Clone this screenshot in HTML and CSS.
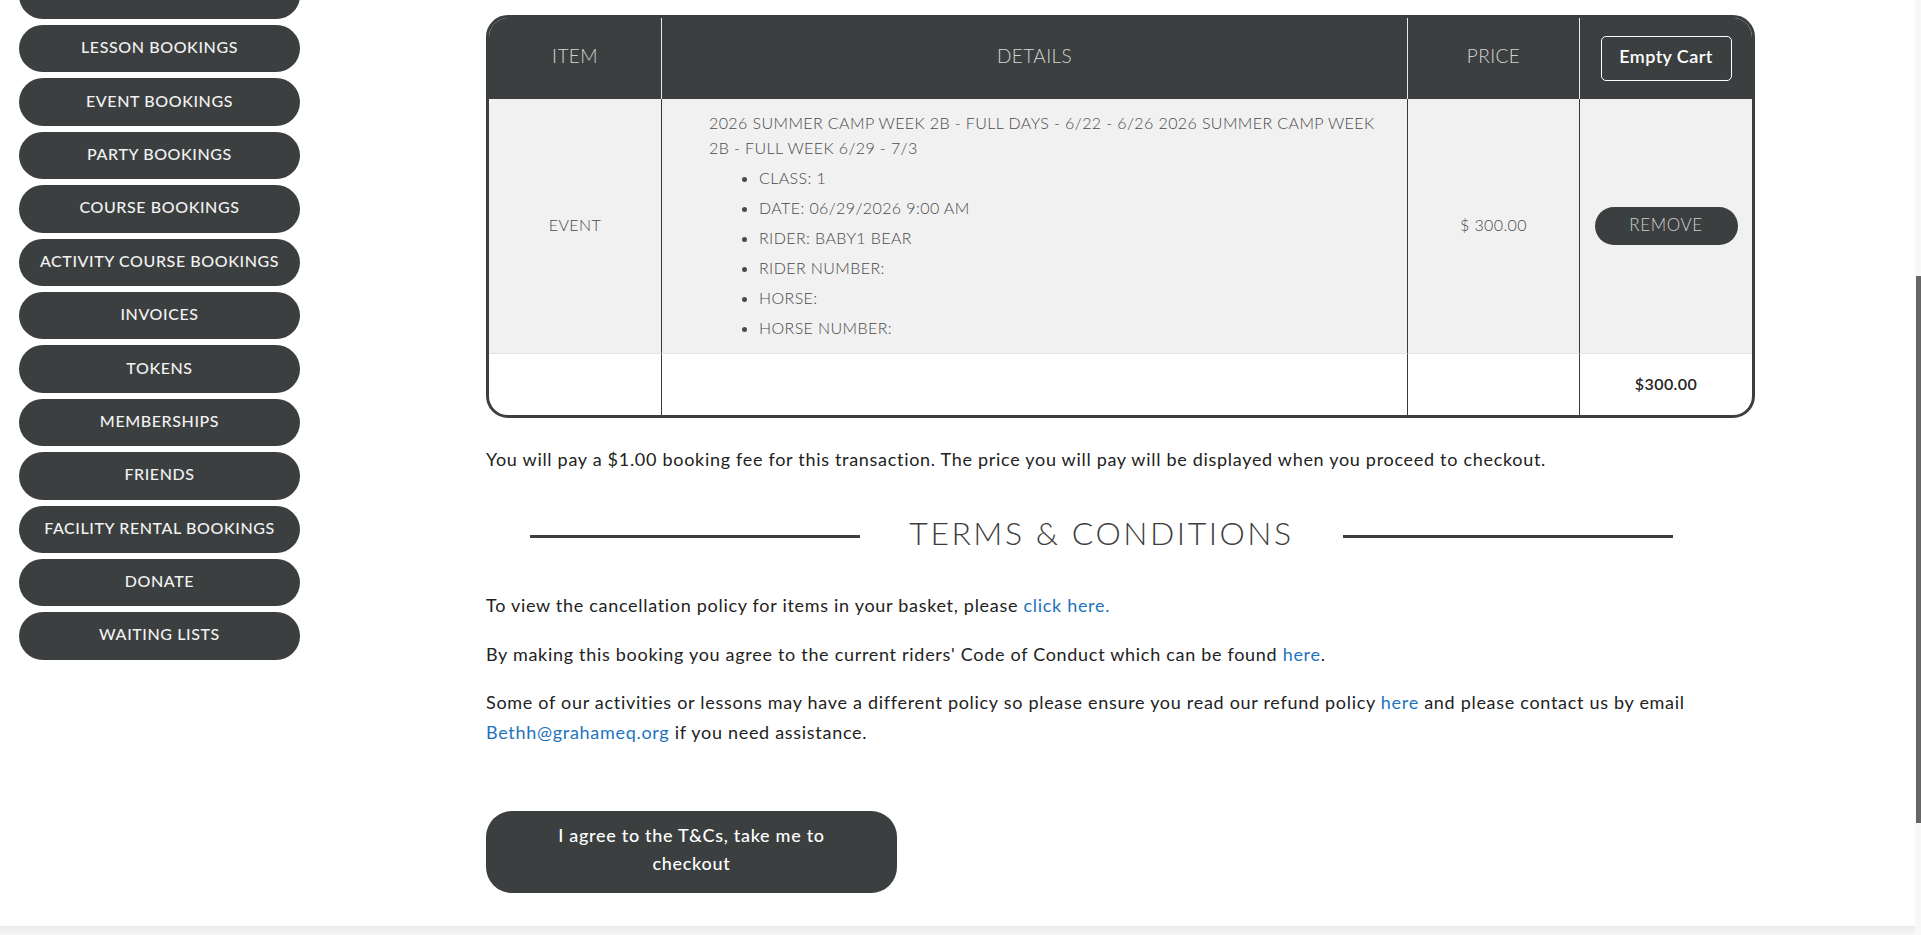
FILE: index.html
```html
<!doctype html>
<html>
    <head>
        <meta charset="utf-8">
        <meta name="viewport" content="width=device-width, initial-scale=1.0">
        <title>Basket</title>
        <link rel="stylesheet" href="styles.css">
    </head>
    <body>
        <div class="page">
            <nav class="sidebar">
                <a class="side-btn" href="#"></a>
                <a class="side-btn" href="#">Lesson Bookings</a>
                <a class="side-btn" href="#">Event Bookings</a>
                <a class="side-btn" href="#">Party Bookings</a>
                <a class="side-btn" href="#">Course Bookings</a>
                <a class="side-btn" href="#">Activity Course Bookings</a>
                <a class="side-btn" href="#">Invoices</a>
                <a class="side-btn" href="#">Tokens</a>
                <a class="side-btn" href="#">Memberships</a>
                <a class="side-btn" href="#">Friends</a>
                <a class="side-btn" href="#">Facility Rental Bookings</a>
                <a class="side-btn" href="#">Donate</a>
                <a class="side-btn" href="#">Waiting Lists</a>
            </nav>

            <main class="content">
                <div class="cart">
                    <table class="cart-table">
                        <colgroup>
                            <col class="col-item">
                            <col class="col-details">
                            <col class="col-price">
                            <col class="col-action">
                        </colgroup>
                        <thead>
                            <tr>
                                <th>Item</th>
                                <th>Details</th>
                                <th>Price</th>
                                <th><button type="button" class="empty-cart">Empty Cart</button></th>
                            </tr>
                        </thead>
                        <tbody>
                            <tr>
                                <td>Event</td>
                                <td class="details">
                                    <p>2026 Summer Camp Week 2B - Full Days - 6/22 - 6/26 2026 Summer Camp Week 2B - Full Week 6/29 - 7/3</p>
                                    <ul>
                                        <li>Class: 1</li>
                                        <li>Date: 06/29/2026 9:00 AM</li>
                                        <li>Rider: Baby1 Bear</li>
                                        <li>Rider Number:</li>
                                        <li>Horse:</li>
                                        <li>Horse Number:</li>
                                    </ul>
                                </td>
                                <td>$ 300.00</td>
                                <td class="action"><button type="button" class="remove">Remove</button></td>
                            </tr>
                        </tbody>
                        <tfoot>
                            <tr>
                                <td></td>
                                <td></td>
                                <td></td>
                                <td class="total">$300.00</td>
                            </tr>
                        </tfoot>
                    </table>
                </div>

                <p class="fee">You will pay a $1.00 booking fee for this transaction. The price you will pay will be displayed when you proceed to checkout.</p>

                <h2 class="section-title"><span class="rule"></span><span>Terms &amp; Conditions</span><span class="rule"></span></h2>

                <p>To view the cancellation policy for items in your basket, please <a href="#">click here.</a></p>
                <p>By making this booking you agree to the current riders' Code of Conduct which can be found <a href="#">here</a>.</p>
                <p>Some of our activities or lessons may have a different policy so please ensure you read our refund policy <a href="#">here</a> and please contact us by email <a href="#">Bethh@grahameq.org</a> if you need assistance.</p>

                <div class="actions">
                    <button type="button" class="checkout">I agree to the T&amp;Cs, take me to checkout</button>
                </div>
            </main>
        </div>

        <div class="footer-strip"></div>
        <div class="scrollbar"><div class="thumb"></div></div>
    </body>
</html>
```

FILE: styles.css
```css
html, body {
    margin: 0;
    padding: 0;
    height: 100%;
    overflow: hidden;
}
body {
    font-family: Lato, "Open Sans", sans-serif;
    color: #222;
    background: #fff;
    display: flex;
    flex-direction: column;
}
.page {
    flex: 1;
    display: flex;
    align-items: flex-start;
    overflow: hidden;
}


/* sidebar */
.sidebar {
    width: 281px;
    margin: -28.4px 0 0 19px;
    display: flex;
    flex-direction: column;
    gap: 6px;
}
.side-btn {
    box-sizing: border-box;
    height: 47.4px;
    padding-bottom: 4px;
    border-radius: 24px;
    background: #3c3f3f;
    color: #f2f2f2;
    display: flex;
    align-items: center;
    justify-content: center;
    font-size: 16px;
    font-weight: 500;
    letter-spacing: .6px;
    text-transform: uppercase;
    text-decoration: none;
}


/* main column */
.content {
    width: 1231px;
    margin-left: 186px;
    padding-top: 15px;
    font-size: 18px;
    letter-spacing: .7px;
}
.content p {
    margin: 0 0 19px;
    line-height: 29.5px;
}
.content a {
    color: #1e73be;
    text-decoration: none;
}

.cart {
    width: 1263px;
    border: 3px solid #3c3f3f;
    border-radius: 22px;
    overflow: hidden;
}
.cart-table {
    width: 100%;
    border-collapse: separate;
    border-spacing: 0;
    table-layout: fixed;
    letter-spacing: 0;
}
.col-item { width: 173px; }
.col-details { width: 746px; }
.col-price { width: 172px; }
.col-action { width: 172px; }

.cart-table th {
    height: 75px;
    padding: 0 0 6px;
    background: #3c3f3f;
    color: #d4d4d4;
    font-size: 19px;
    font-weight: 300;
    letter-spacing: .4px;
    text-transform: uppercase;
    border-right: 1px solid #e8e8e8;
}
.cart-table th:last-child {
    padding-bottom: 0;
    height: 81px;
}
.cart-table td {
    padding: 0 0 4px;
    text-align: center;
    vertical-align: middle;
    border-right: 1px solid #3a3a3a;
    color: #4a4a4a;
    font-size: 16px;
    font-weight: 300;
    letter-spacing: .4px;
    text-transform: uppercase;
}
.cart-table th:last-child, .cart-table td:last-child {
    border-right: 0;
}
.cart-table tbody td {
    background: #f1f1f1;
    border-bottom: 1px solid #e2e2e2;
}
.cart-table td.action {
    padding: 0;
}
.cart-table tfoot td {
    height: 59px;
    padding-bottom: 2px;
}

.cart-table td.details {
    text-align: left;
    padding: 12px 12px 7px 47px;
}
.details p {
    margin: 0;
    line-height: 24.5px;
}
.details ul {
    margin: 6px 0 0;
    padding-left: 50px;
}
.details li {
    line-height: 24px;
    margin-bottom: 6px;
}

.empty-cart {
    width: 131px;
    height: 45px;
    padding: 0 0 5px;
    border: 1px solid #fff;
    border-radius: 5px;
    background: transparent;
    color: #fff;
    font-family: inherit;
    font-size: 18px;
    font-weight: 600;
    letter-spacing: .4px;
}
.remove {
    width: 143px;
    height: 38px;
    padding: 0 0 3px;
    border: 0;
    border-radius: 19px;
    background: #3c3f3f;
    color: #cfcfcf;
    font-family: inherit;
    font-size: 17px;
    font-weight: 300;
    letter-spacing: .6px;
    text-transform: uppercase;
}
.cart-table td.total {
    color: #222;
    font-weight: 600;
}

.content p.fee {
    margin-top: 27px;
}

.section-title {
    margin: 38.5px 0 38px;
    height: 40px;
    display: flex;
    align-items: center;
    justify-content: center;
    gap: 49px;
    font-size: 32px;
    font-weight: 300;
    letter-spacing: 2.5px;
    color: #3d3d3d;
    text-transform: uppercase;
    line-height: 40px;
}
.section-title .rule {
    width: 330px;
    height: 3px;
    margin-top: 6px;
    background: #3c3f3f;
}

.actions {
    margin-top: 64px;
}
.checkout {
    display: block;
    width: 411px;
    height: 82px;
    padding: 10px 50px 16px;
    border: 0;
    border-radius: 26px;
    background: #3c3f3f;
    color: #fff;
    font-family: inherit;
    font-size: 18px;
    font-weight: 500;
    line-height: 28px;
    letter-spacing: .7px;
}


/* page chrome */
.footer-strip {
    height: 9px;
    background: linear-gradient(180deg, #ececec, #f6f6f6);
}
.scrollbar {
    position: fixed;
    top: 0;
    right: 0;
    bottom: 0;
    width: 6px;
    background: #f8f8f8;
}
.scrollbar .thumb {
    margin-top: 276px;
    margin-left: 1px;
    width: 5px;
    height: 547px;
    background: #666;
}
```
